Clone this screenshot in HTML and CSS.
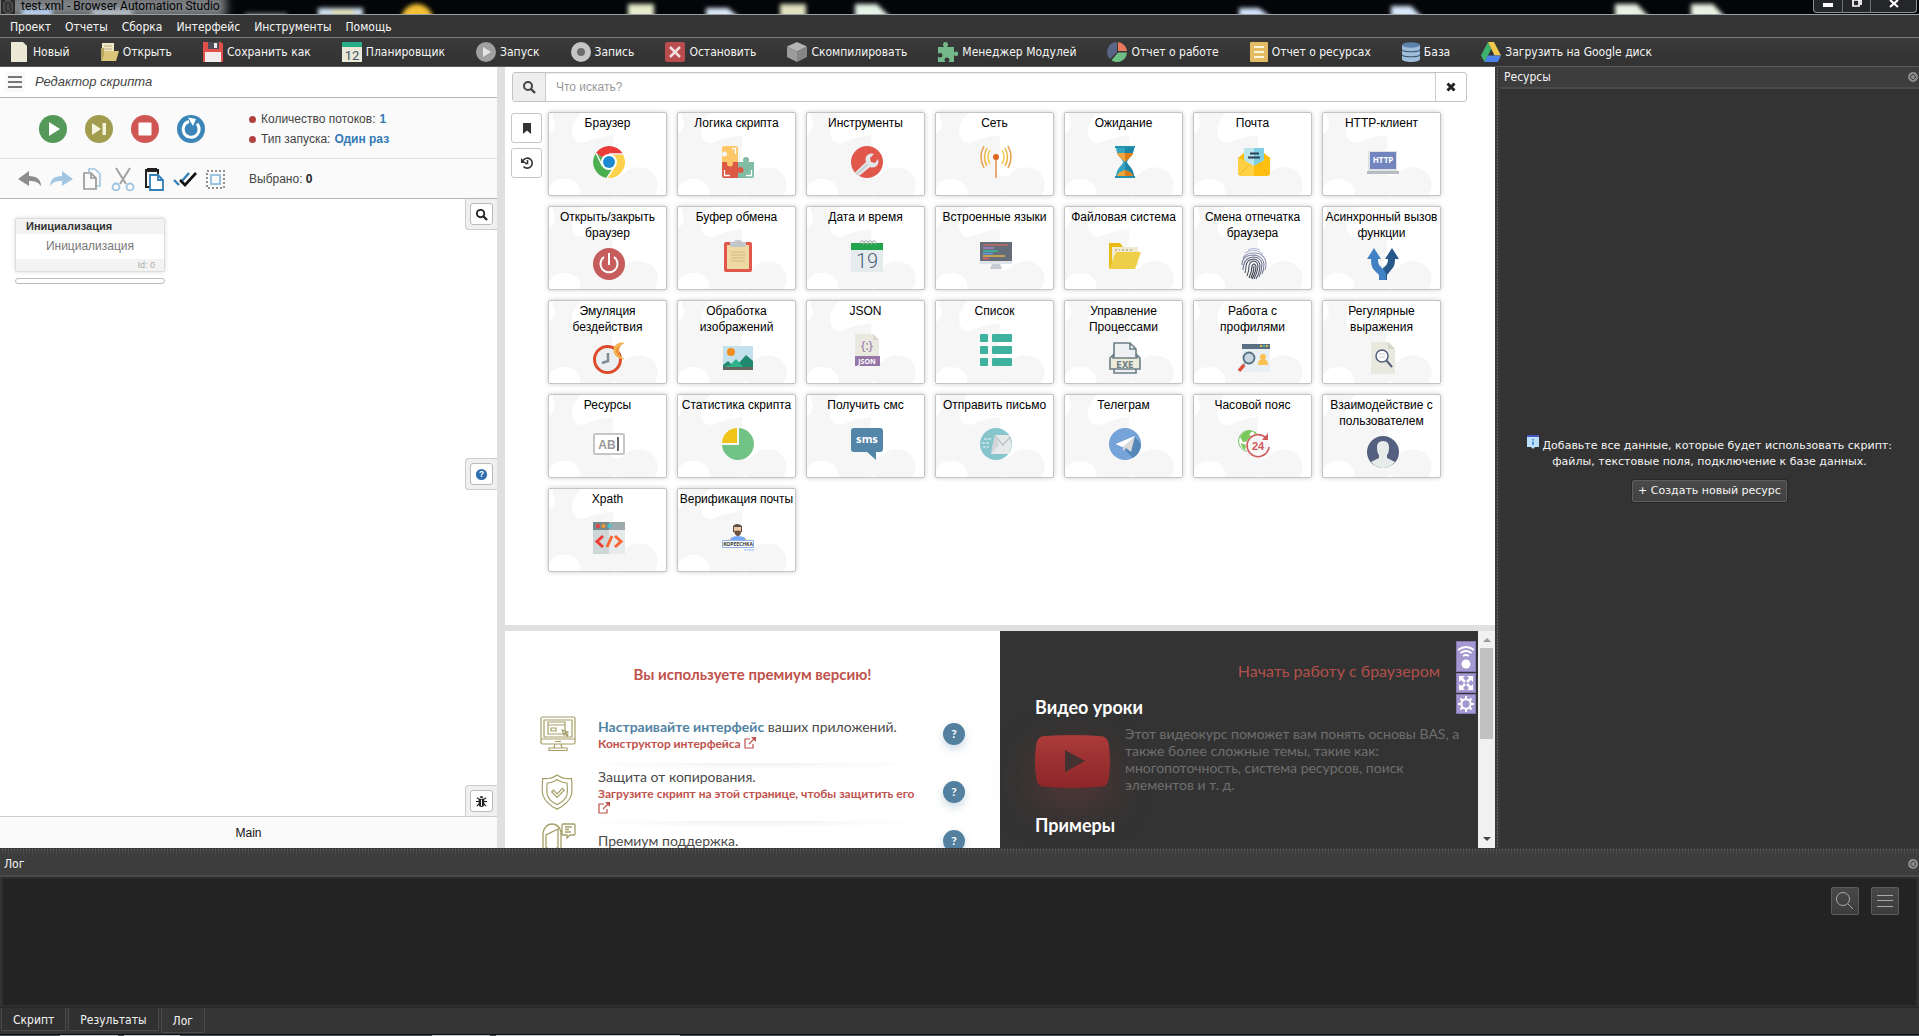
FILE: index.html
```html
<!DOCTYPE html>
<html lang="ru">
<head>
<meta charset="utf-8">
<title>test.xml - Browser Automation Studio</title>
<link rel="stylesheet" href="styles.css">
</head>
<body>
<header class="titlebar">
  <svg class="desktop-glass" width="1919" height="14" aria-hidden="true">
    <defs><filter id="soft" x="-20%" y="-60%" width="140%" height="220%"><feGaussianBlur stdDeviation="2"/></filter>
    <filter id="softer" x="-20%" y="-100%" width="140%" height="300%"><feGaussianBlur stdDeviation="5"/></filter></defs>
    <rect x="-10" y="-6" width="236" height="24" fill="#7d8084" filter="url(#softer)"/>
    <g filter="url(#soft)">
      <rect x="22" y="9" width="30" height="8" fill="#b9d2f2"/><rect x="92" y="9" width="40" height="8" fill="#b4bcc4"/>
      <rect x="318" y="8" width="45" height="9" fill="#cfe0ee"/><rect x="332" y="10" width="22" height="6" fill="#e5dfae"/>
      <circle cx="417" cy="20" r="16" fill="#f4c034"/>
      <rect x="245" y="13" width="42" height="5" fill="#67727c"/>
      <rect x="628" y="4" width="26" height="14" fill="#e6eccb"/>
      <path d="M706 8h22l12 10h-34z" fill="#dbe9fb"/><rect x="780" y="4" width="26" height="14" fill="#dfe0bd"/>
      <path d="M855 4h22l14 14h-36z" fill="#e4f3e6"/><path d="M1239 8h20l13 10h-33z" fill="#d3e2fa"/>
      <path d="M1391 6h20l12 12h-32z" fill="#d8e8fb"/><path d="M1615 4h22l13 14h-35z" fill="#e8f2e2"/><path d="M1691 4h22l13 14h-35z" fill="#e8f2e2"/>
    </g>
  </svg>
  <svg class="app-logo" viewBox="0 0 14 14" aria-hidden="true"><rect width="14" height="14" fill="#4a4a4a"/><path d="M4 1H1v12h3M10 1h3v12h-3" fill="none" stroke="#222" stroke-width="1.5"/><path d="M5 3v8h3.500q1.500-.500 1.500-2t-2-2.200q1.500-.600 1.500-2T8 3z" fill="none" stroke="#222"/></svg>
  <h1>test.xml - Browser Automation Studio</h1>
  <div class="window-buttons">
    <button aria-label="Свернуть"><svg viewBox="0 0 12 8"><rect x="1" y="3" width="10" height="4" fill="#fff"/></svg></button>
    <button aria-label="Восстановить"><svg viewBox="0 0 12 8"><path d="M4 0h6v5M2 0h6v6H2z" fill="none" stroke="#fff" stroke-width="1.700"/></svg></button>
    <button class="wide" aria-label="Закрыть"><svg viewBox="0 0 12 8"><path d="M2 0l8 7M10 0L2 7" stroke="#fff" stroke-width="2.200"/></svg></button>
  </div>
</header>

<nav class="menubar">
  <button>Проект</button><button>Отчеты</button><button>Сборка</button><button>Интерфейс</button><button>Инструменты</button><button>Помощь</button>
</nav>

<div class="toolbar" role="toolbar">
  <button class="first"><svg class="ti narrow" viewBox="0 0 16 20"><path d="M0 0h12l4 4v16H0z" fill="#ece8d6"/></svg>Новый</button>
  <button><svg class="ti short" viewBox="0 0 18 20"><path d="M1 1h12v14H1z" fill="#efe6c3"/><path d="M3 4h8M3 7h8M3 10h7" stroke="#b9ad80"/><path d="M0 6h3v13H0z" fill="#b7a560"/><path d="M1 19l3-10h14l-3 10z" fill="#dcc67a"/></svg>Открыть</button>
  <button><svg class="ti" viewBox="0 0 20 20"><path d="M0 0h18l2 2v18H0z" fill="#e2504c"/><path d="M5 0h11v7H5z" fill="#4e4c58"/><path d="M11 1h3v5h-3z" fill="#eee"/><path d="M2 10h16v10H2z" fill="#f3ecec"/></svg>Сохранить как</button>
  <button><svg class="ti" viewBox="0 0 20 20"><path d="M0 0h20v20H0z" fill="#e9e8d8"/><path d="M0 0h20v5H0z" fill="#27ae86"/><text x="10" y="18" text-anchor="middle" font-family="Roboto, sans-serif" font-size="13" fill="#465566">12</text></svg>Планировщик</button>
  <button><svg class="ti" viewBox="0 0 20 20"><circle cx="10" cy="10" r="10" fill="#a0a0a0"/><path d="M7 5l8 5-8 5z" fill="#e5e5e5"/></svg>Запуск</button>
  <button><svg class="ti" viewBox="0 0 20 20"><circle cx="10" cy="10" r="10" fill="#c6c6c6"/><circle cx="10" cy="10" r="4" fill="#6d6d6d"/></svg>Запись</button>
  <button><svg class="ti" viewBox="0 0 20 20"><rect width="20" height="20" rx="2" fill="#b94c4e"/><path d="M5 5l10 10M15 5L5 15" stroke="#f5dede" stroke-width="2.500"/></svg>Остановить</button>
  <button><svg class="ti" viewBox="0 0 20 20"><path d="M10 0l10 4.500-10 5L0 4.500z" fill="#b5b5b5"/><path d="M0 4.500l10 5V20L0 15z" fill="#9c9c9c"/><path d="M20 4.500l-10 5V20l10-5z" fill="#868686"/></svg>Скомпилировать</button>
  <button><svg class="ti" viewBox="0 0 20 20"><path d="M0 5h6c-.6-1-1-1.500-1-2.500a2.500 2.500 0 0 1 5 0c0 1-.4 1.500-1 2.500h7v5.500c1-.6 1.500-1 2.200-1a2.200 2.200 0 0 1 0 4.500c-.7 0-1.200-.4-2.200-1V20h-5.500c.6-1 1-1.300 1-2a2.500 2.500 0 0 0-5 0c0 .7.400 1 1 2H0v-5.500c1 .6 1.500 1 2.200 1a2.200 2.200 0 0 0 0-4.500c-.7 0-1.200.4-2.200 1z" fill="#73b98a"/></svg>Менеджер Модулей</button>
  <button><svg class="ti" viewBox="0 0 20 20"><path d="M10 10V0A10 10 0 0 0 3 17z" fill="#5a6685"/><path d="M11 9V0a10 10 0 0 1 9 9z" fill="#ea7a5c"/><path d="M11 10.500h9A10 10 0 0 1 4.500 18.300z" fill="#6fbf85"/></svg>Отчет о работе</button>
  <button><svg class="ti short" viewBox="0 0 18 20"><rect width="18" height="20" rx="1" fill="#e2bb62"/><path d="M4 5h10M4 10h10M4 15h10" stroke="#fdf6dd" stroke-width="2"/></svg>Отчет о ресурсах</button>
  <button><svg class="ti short" viewBox="0 0 18 20"><path d="M0 3v14c0 4 18 4 18 0V3z" fill="#9fbddb"/><ellipse cx="9" cy="3" rx="9" ry="2.800" fill="#5d83ac"/><path d="M0 7.500c0 3 18 3 18 0M0 12.500c0 3 18 3 18 0" fill="none" stroke="#3f5974" stroke-width="1.200"/></svg>База</button>
  <button><svg class="ti" viewBox="0 0 20 20"><path d="M7 0L0 13.500 3.500 20 10.300 7z" fill="#3db26d"/><path d="M7 0h6l7 13.500h-6.500z" fill="#f1c94f"/><path d="M6.800 13.500H20L16.800 20H3.500z" fill="#4a82e8"/></svg>Загрузить на Google диск</button>
</div>

<main class="workspace">
  <section class="editor">
    <header class="editor-head">
      <button class="burger" aria-label="Меню"><svg viewBox="0 0 14 14"><path d="M0 2h14M0 7h14M0 12h14" stroke="#777" stroke-width="2"/></svg></button>
      <em>Редактор скрипта</em>
    </header>
    <div class="run-bar">
      <div class="run-buttons">
        <button aria-label="Запустить"><svg viewBox="0 0 28 28"><circle cx="14" cy="14" r="14" fill="#54985a"/><path d="M10 7l11 7-11 7z" fill="#fff"/></svg></button>
        <button aria-label="Шаг"><svg viewBox="0 0 28 28"><circle cx="14" cy="14" r="14" fill="#a29c4f"/><path d="M7 8l9 6-9 6zM17.500 8H21v12h-3.500z" fill="#f6f3dd"/></svg></button>
        <button aria-label="Стоп"><svg viewBox="0 0 28 28"><circle cx="14" cy="14" r="14" fill="#d05654"/><rect x="7.500" y="7.500" width="13" height="13" rx="1" fill="#fff"/></svg></button>
        <button aria-label="Перезапустить"><svg viewBox="0 0 28 28"><circle cx="14" cy="14" r="14" fill="#3b85b9"/><path d="M12 6.500a8 8 0 1 0 8 2.300" fill="none" stroke="#fff" stroke-width="3"/><path d="M11 2.500l8 1.500-3 7z" fill="#fff"/></svg></button>
      </div>
      <ul class="run-info">
        <li>Количество потоков: <a href="#threads">1</a></li>
        <li>Тип запуска: <a href="#mode">Один раз</a></li>
      </ul>
    </div>
    <div class="edit-bar">
      <div class="edit-buttons">
        <button aria-label="Отменить"><svg viewBox="0 0 24 24"><path d="M0 12l11-8v5c8 0 12 4 12 10-3-4-6-5-12-5v5z" fill="#8d8d8d"/></svg></button>
        <button aria-label="Повторить"><svg viewBox="0 0 24 24"><path d="M24 12L13 4v5C5 9 1 13 1 19c3-4 6-5 12-5v5z" fill="#a3c7e2"/></svg></button>
        <button aria-label="Копировать"><svg viewBox="0 0 24 24" fill="#fafafa"><path d="M9 5V2h6l5 5v12h-4" stroke="#a3c7e2" stroke-width="1.700"/><path d="M4 6h7l5 5v11H4zM11 6v5h5" stroke="#999" stroke-width="1.700"/></svg></button>
        <button aria-label="Вырезать"><svg viewBox="0 0 24 24" fill="none"><path d="M5 1l10 16M19 1L9 17" stroke="#a2a2a2" stroke-width="2"/><circle cx="5" cy="20" r="3.500" stroke="#9cc4e0" stroke-width="1.800"/><circle cx="19" cy="20" r="3.500" stroke="#9cc4e0" stroke-width="1.800"/></svg></button>
        <button aria-label="Вставить"><svg viewBox="0 0 24 24"><path d="M8 20H4V3h12v4" fill="none" stroke="#222" stroke-width="2"/><path d="M5 1h10v4H5z" fill="#222"/><path d="M8 8h8l5 5v10H8zM16 8v5h5" fill="#fff" stroke="#337fb8" stroke-width="1.800"/></svg></button>
        <button aria-label="Выделить все"><svg viewBox="0 0 24 24" fill="none"><path d="M1 13l5 5M9 14l7-8" stroke="#337fb8" stroke-width="2.400"/><path d="M7 13l5 5L23 6" stroke="#111" stroke-width="2.600"/></svg></button>
        <button aria-label="Выделить область"><svg viewBox="0 0 24 24" fill="none"><rect x="3" y="4" width="17" height="17" stroke="#909090" stroke-width="2" stroke-dasharray="2 2"/><rect x="7" y="8" width="9" height="9" stroke="#9cc4e0" stroke-width="2"/></svg></button>
      </div>
      <p>Выбрано: <b>0</b></p>
    </div>
    <div class="canvas">
      <article class="node"><h2>Инициализация</h2><p>Инициализация</p><footer>Id: 0</footer></article>
      <div class="node-slot"></div>
      <div class="corner corner-top"><button aria-label="Поиск"><svg viewBox="0 0 14 14"><circle cx="6" cy="6" r="4" fill="none" stroke="#222" stroke-width="2"/><path d="M9 9l4 4" stroke="#222" stroke-width="2.400"/></svg></button></div>
      <div class="corner corner-mid"><button aria-label="Справка"><svg viewBox="0 0 14 14"><circle cx="7" cy="7" r="6" fill="#2f6fae"/><text x="7" y="10" text-anchor="middle" font-family="Liberation Sans, sans-serif" font-weight="bold" font-size="9" fill="#fff">?</text></svg></button></div>
      <div class="corner corner-low"><button aria-label="Отладка"><svg viewBox="0 0 14 14"><path d="M5 3a2 2 0 0 1 4 0z" fill="#222"/><path d="M4 4h6v6a3 3 0 0 1-6 0z" fill="#222"/><path d="M1 7h12M2 3l3 2M12 3L9 5M2 12l3-3M12 12L9 9" stroke="#222" stroke-width="1.200"/><path d="M7 5v7" stroke="#fff"/></svg></button></div>
    </div>
    <footer class="editor-foot">Main</footer>
  </section>

  <div class="split"></div>

  <section class="center">
    <div class="palette">
      <div class="search">
        <label for="q" aria-label="Поиск"><svg viewBox="0 0 14 14"><circle cx="6" cy="6" r="4" fill="none" stroke="#444" stroke-width="2"/><path d="M9 9l4 4" stroke="#444" stroke-width="2.400"/></svg></label>
        <input id="q" type="text" placeholder="Что искать?">
        <button aria-label="Очистить"><svg viewBox="0 0 14 14"><path d="M3.500 3.500l7 7M10.500 3.500l-7 7" stroke="#222" stroke-width="3"/></svg></button>
      </div>
      <div class="palette-body">
        <div class="side">
          <button aria-label="Закладки"><svg viewBox="0 0 14 14"><path d="M3 2h8v11L7 9.500 3 13z" fill="#333"/></svg></button>
          <button aria-label="История"><svg viewBox="0 0 14 14"><path d="M3 4.500A5 5 0 1 1 3.500 10.500M7.500 4v3.500H5" fill="none" stroke="#333" stroke-width="1.600"/><path d="M1 2l0 5h5z" fill="#333"/></svg></button>
        </div>
        <div class="cards">
          <button class="card"><span>Браузер</span><i><svg viewBox="0 0 32 32"><path d="M16 16L3 7A16 16 0 0 1 30 8z" fill="#e93c38"/><path d="M16 16L3 7a16 16 0 0 0 11 25l7-12z" fill="#4bae4f"/><path d="M16 16l5 4-7 12A16 16 0 0 0 30 8.500H17z" fill="#fed24a"/><path d="M16 8h14M9.500 20L3 7M22 20l-8 12" stroke="#f7f7f7" stroke-width="1.500"/><circle cx="16" cy="16" r="8" fill="#fff"/><circle cx="16" cy="16" r="6" fill="#1b8ad3"/></svg></i></button>
          <button class="card"><span>Логика скрипта</span><i><svg viewBox="0 0 32 32"><path d="M2 0h12q2 0 2 2v14H0V2q0-2 2-2z" fill="#fec768"/><path d="M16 16h16v14q0 2-2 2H16z" fill="#80bda4"/><circle cx="24" cy="14" r="3" fill="#80bda4"/><path d="M0 16h16v16H2q-2 0-2-2z" fill="#dc5a45"/><circle cx="18.500" cy="24" r="3" fill="#dc5a45"/><circle cx="8" cy="17.500" r="3" fill="#fec768"/><circle cx="2.500" cy="8" r="2.500" fill="#f7f7f7"/><path d="M10 2.500h3.500V8M2.500 24v5.500H8M24 29.500h5.500V24" fill="none" stroke="#fff" stroke-width="1.300"/></svg></i></button>
          <button class="card"><span>Инструменты</span><i><svg viewBox="0 0 32 32"><circle cx="16" cy="16" r="16" fill="#e2574c"/><path d="M4 26.500L15 16c-2-6 3-10 8-8l-4 4 1 4 4 1 3-4c2 6-3 10-8 8L8 30z" fill="#e3e7ea"/><path d="M6 28l11-10" stroke="#c9ced2" stroke-width="2"/></svg></i></button>
          <button class="card"><span>Сеть</span><i><svg viewBox="0 0 32 32" fill="none"><path d="M16 13v19" stroke="#eda878" stroke-width="2"/><circle cx="16" cy="11" r="3" fill="#e0681f"/><path d="M10 4q-4 7 0 14M22 4q4 7 0 14" stroke="#f2c84b" stroke-width="1.500"/><path d="M7 2q-5 9 0 18M25 2q5 9 0 18" stroke="#eeb23f" stroke-width="1.500"/><path d="M4 0q-6 11 0 22M28 0q6 11 0 22" stroke="#e8a050" stroke-width="1.500"/></svg></i></button>
          <button class="card"><span>Ожидание</span><i><svg viewBox="0 0 32 32"><path d="M7 1h18c0 9-7 12-7 15s7 6 7 15H7c0-9 7-12 7-15S7 10 7 1z" fill="#36a3c0"/><path d="M16 1h9c0 9-7 12-7 15s7 6 7 15h-9z" fill="#1d86a6"/><path d="M8 7h16c-1 4-6 6-8 9-2-3-7-5-8-9zM8 30q1-4 8-6 7 2 8 6z" fill="#f0a53a"/><path d="M16 7h8c-1 4-6 6-8 9zM16 24q7 2 8 6h-8z" fill="#de7d14"/><path d="M6 0h20v2H6zM6 30h20v2H6z" fill="#2193ae"/></svg></i></button>
          <button class="card"><span>Почта</span><i><svg viewBox="0 0 32 32"><path d="M0 12l6-5h20l6 5v14q0 4-4 4H4q-4 0-4-4z" fill="#fdbd10"/><path d="M6 2h20v12l-10 8L6 14z" fill="#b9e5ee"/><path d="M16 2h10v12l-10 8z" fill="#80cfe3"/><path d="M12 7.500h9M10 11.500h12" stroke="#2d4054" stroke-width="2"/><path d="M0 11l16 9 16-9v15q0 4-4 4H4q-4 0-4-4z" fill="#ffd043"/><path d="M32 11l-16 9v10h12q4 0 4-4z" fill="#fdc010"/><path d="M1 29l10-10M31 29L21 19" stroke="#f2b01c" stroke-width=".8"/></svg></i></button>
          <button class="card"><span>HTTP-клиент</span><i><svg viewBox="0 0 32 32"><path d="M1 5h29v21H1z" fill="#dfe3e6"/><path d="M3 6h26v17H3z" fill="#7285bf"/><text x="16" y="17" text-anchor="middle" font-family="Noto Sans, sans-serif" font-weight="bold" font-size="8" fill="#fff">HTTP</text><path d="M0 25h32v3H0z" fill="#b7bcc2"/></svg></i></button>

          <button class="card"><span>Открыть/закрыть браузер</span><i><svg viewBox="0 0 32 32"><circle cx="16" cy="16" r="16" fill="#c75c5c"/><path d="M11 9a8.500 8.500 0 1 0 10 0M16 5v12" fill="none" stroke="#fff" stroke-width="2"/></svg></i></button>
          <button class="card"><span>Буфер обмена</span><i><svg viewBox="0 0 32 32"><rect x="2" y="2" width="28" height="30" rx="2" fill="#e2574c"/><path d="M5 5h22v24H5z" fill="#efd9a3"/><path d="M8 2h4q0-2 4-2t4 2h4v3q0 2-3 2H11q-3 0-3-2z" fill="#c0c6ca"/><path d="M9 12h14M9 15h14M9 18h14M9 21h14" stroke="#d4b87e"/></svg></i></button>
          <button class="card"><span>Дата и время</span><i><svg viewBox="0 0 32 32"><path d="M0 3h32v29H0z" fill="#e6ecee"/><path d="M0 3h32v7H0z" fill="#22a44c"/><path d="M9 4q0-4 3-3t0 4M13 4q0-4 3-3t0 4M17 4q0-4 3-3t0 4M21 4q0-4 3-3t0 4" fill="none" stroke="#9aa8a0"/><text x="16" y="28" text-anchor="middle" font-family="Roboto, sans-serif" font-weight="300" font-size="20" fill="#4b6078">19</text></svg></i></button>
          <button class="card"><span>Встроенные языки</span><i><svg viewBox="0 0 32 32"><path d="M0 2h32v19H0z" fill="#656d78"/><path d="M0 21h32v3H0z" fill="#dfe3e8"/><path d="M12 24h8l2 5H10z" fill="#c8ccd4"/><path d="M3 5h25" stroke="#ed6b55"/><path d="M3 8h11" stroke="#a786d0" stroke-width="1.500"/><path d="M3 11h15" stroke="#37bc9b" stroke-width="1.500"/><path d="M3 13.500h10" stroke="#5d9cec" stroke-width="1.500"/><path d="M3 16h22" stroke="#e0b348" stroke-width="1.500"/><path d="M3 18.500h6" stroke="#ed5565" stroke-width="1.500"/></svg></i></button>
          <button class="card"><span>Файловая система</span><i><svg viewBox="0 0 32 32"><path d="M0 3h11l3 4v21H0z" fill="#ebba16"/><path d="M3 7h26v18H3z" fill="#f1ead2"/><path d="M6 10h2M10 10h1M13 10h2M17 10h2M21 10h2" stroke="#cabf97" stroke-width="2"/><path d="M7 12h25l-6 17H0z" fill="#efce4a"/></svg></i></button>
          <button class="card"><span>Смена отпечатка браузера</span><i><svg viewBox="0 0 32 32" fill="none"><g stroke-width="1.100"><path d="M10 2q6-3 12 0M7 5q9-6 18 1" stroke="#b4bad8"/><path d="M5 10q3-5 11-5t11 6q2 6 0 11" stroke="#9197b6"/><path d="M4 17q0-10 12-10 9 1 10 9 0 6-2 10" stroke="#7a809c"/><path d="M5 22q0-3 1-6 2-7 10-7 7 1 8 7 0 7-3 13" stroke="#6d7189"/><path d="M7 25q1-4 1-7 1-7 8-7 5 1 6 6 0 7-4 14" stroke="#55586c"/><path d="M9 28q2-5 2-10 1-5 5-5 4 1 4 6-1 6-4 12" stroke="#4b4e62"/><path d="M11 30q3-6 3-12 2-4 4 0 0 6-4 13M16 18q0 6-3 12" stroke="#3c3f50"/></g></svg></i></button>
          <button class="card"><span>Асинхронный вызов функции</span><i><svg viewBox="0 0 32 32"><path d="M25 0l7 11h-4c0 6-1 8-4 11l-4 5v5h-4V20c4-3 5-5 5-9h-3z" fill="#28588a"/><path d="M7 0l7 11h-3c0 5 1 6 4 9s4 5 4 8v4h-7v-5l-4-4c-3-3-4-6-4-12H0z" fill="#4182c4"/></svg></i></button>

          <button class="card"><span>Эмуляция бездействия</span><i><svg viewBox="0 0 32 32"><circle cx="14.500" cy="17.500" r="13" fill="#eceff1" stroke="#dd4a2c" stroke-width="3"/><path d="M15 11v8l-6 2" fill="none" stroke="#7f8b93" stroke-width="2.500"/><path d="M32 1q-7-2-11 4-2 6 3 10 4 3 8 2-6-2-6-8t6-8z" fill="#f2b351"/><path d="M28 3q-5 5-1 12-3-2-4-6 1-4 5-6z" fill="#ed8a3c"/></svg></i></button>
          <button class="card"><span>Обработка изображений</span><i><svg viewBox="0 0 32 32"><path d="M1 4h30v24H1z" fill="#c3e1ed"/><circle cx="9" cy="10" r="4" fill="#ef8d1e"/><path d="M1 26v-3l5-4 4 4zM16 22l8-9 7 6v7H16z" fill="#1f8a6d"/><path d="M5 26l9-9 8 9z" fill="#2eb28b"/><path d="M1 25h30v3H1z" fill="#67645e"/></svg></i></button>
          <button class="card"><span>JSON</span><i><svg viewBox="0 0 32 32"><path d="M4 0h18l6 6v26H4z" fill="#e9e9e0"/><path d="M22 0l6 6h-6z" fill="#d9d7ca"/><path d="M4 22h25v10H4z" fill="#9777a8"/><text x="16" y="16" text-anchor="middle" font-family="Noto Sans, sans-serif" font-size="12" fill="#9777a8">{:}</text><text x="16" y="30" text-anchor="middle" font-family="Noto Sans, sans-serif" font-weight="bold" font-size="7" fill="#fff">JSON</text></svg></i></button>
          <button class="card"><span>Список</span><i><svg viewBox="0 0 32 32" fill="#3db39e"><rect width="8" height="8" rx="1"/><rect x="12" width="20" height="8" rx="1"/><rect y="12" width="8" height="8" rx="1"/><rect x="12" y="12" width="20" height="8" rx="1"/><rect y="24" width="8" height="8" rx="1"/><rect x="12" y="24" width="20" height="8" rx="1"/></svg></i></button>
          <button class="card"><span>Управление Процессами</span><i><svg viewBox="0 0 32 32"><path d="M5 15V1h16l6 6v8M21 1v6h6" fill="#eef0f1" stroke="#6b7f86" stroke-width="1.600"/><path d="M5 27v4h22v-4" fill="#eef0f1" stroke="#6b7f86" stroke-width="1.600"/><path d="M4 13l-3 3v11h30V16l-3-3v3H4z" fill="#edebda" stroke="#6b7f86" stroke-width="1.600"/><text x="16" y="25.500" text-anchor="middle" font-family="DejaVu Sans Condensed, sans-serif" font-weight="bold" font-size="9" fill="#6b7f86">EXE</text></svg></i></button>
          <button class="card"><span>Работа с профилями</span><i><svg viewBox="0 0 32 32"><path d="M4 2h28v28H4z" fill="#e9eff3"/><path d="M4 2h28v5H4z" fill="#5b7083"/><path d="M22 4h2M28 4h2" stroke="#e2b53f" stroke-width="2"/><path d="M25 4h2" stroke="#4cb5a1" stroke-width="2"/><circle cx="25" cy="15" r="3" fill="#f8c152"/><path d="M20 23q0-6 5-6t5 6z" fill="#f8c152"/><circle cx="11" cy="16" r="5.500" fill="#c9d6df" stroke="#556f83" stroke-width="1.800"/><path d="M7 21l-2 3" stroke="#a9a9a9" stroke-width="2"/><path d="M6 23l-5 6" stroke="#df4d3c" stroke-width="3.500"/></svg></i></button>
          <button class="card"><span>Регулярные выражения</span><i><svg viewBox="0 0 32 32"><path d="M4 0h17l7 7v25H4z" fill="#e8e8df"/><path d="M21 0l7 7h-7z" fill="#d6d5c6"/><circle cx="15" cy="14" r="6" fill="#fff" stroke="#545e7d" stroke-width="1.500"/><path d="M12 12h6M12 15h6" stroke="#ccc"/><path d="M19 18l6 7" stroke="#545e7d" stroke-width="2"/></svg></i></button>

          <button class="card"><span>Ресурсы</span><i><svg viewBox="0 0 32 32"><rect x="1" y="6" width="30" height="20" rx="1" fill="#fff" stroke="#c6c6c6" stroke-width="2"/><text x="14" y="21" text-anchor="middle" font-family="Liberation Sans, sans-serif" font-weight="bold" font-size="12" fill="#999">AB</text><path d="M25 9v14" stroke="#666" stroke-width="2"/></svg></i></button>
          <button class="card"><span>Статистика скрипта</span><i><svg viewBox="0 0 32 32"><path d="M17 0v17H0A16 16 0 1 0 17 0z" fill="#71c285"/><path d="M15 0v15H0A15.500 15.500 0 0 1 15 0z" fill="#f1c419"/></svg></i></button>
          <button class="card"><span>Получить смс</span><i><svg viewBox="0 0 32 32"><path d="M3 0h26q3 0 3 3v18q0 3-3 3h-4v8l-9-8H3q-3 0-3-3V3q0-3 3-3z" fill="#5486aa"/><text x="16" y="15" text-anchor="middle" font-family="Noto Sans, sans-serif" font-weight="bold" font-size="11" fill="#fff">sms</text></svg></i></button>
          <button class="card"><span>Отправить письмо</span><i><svg viewBox="0 0 32 32"><circle cx="16" cy="16" r="16" fill="#87c5cd"/><path d="M15 7h14l3 10-3 9H11z" fill="#e6e9ea"/><path d="M15 7l4 10-8 9z" fill="#d2d6d8"/><path d="M15 8l8 9 7-8" fill="none" stroke="#c0c5c8" stroke-width="1.500"/><path d="M4 11h8M2 15h8M3 19h6" stroke="#e9f4f5" stroke-width="1.200" stroke-dasharray="3 1"/></svg></i></button>
          <button class="card"><span>Телеграм</span><i><svg viewBox="0 0 32 32"><circle cx="16" cy="16" r="16" fill="#76a3da"/><path d="M25 8l7 8q0 9-8 14l-8-8z" fill="#5486b8"/><path d="M7 16l19-8-8 7-4 4z" fill="#fff"/><path d="M26 8l-4 16-5-4-3 3v-5z" fill="#d9d9db"/><path d="M7 16l19-8-11 10-2 1z" fill="#fff"/></svg></i></button>
          <button class="card"><span>Часовой пояс</span><i><svg viewBox="0 0 32 32"><circle cx="11" cy="13" r="10.500" fill="#fff" stroke="#79c26a"/><path d="M2 9q5-8 12-6l-3 4 4 2-4 4-6 1zM3 15l5 2-1 5q-4-3-4-7zM16 3l4 4-3 3z" fill="#79c85a"/><circle cx="20" cy="18" r="12" fill="#f7f7f7"/><path d="M28 10A11 11 0 1 0 31 19" fill="none" stroke="#cf5a5c" stroke-width="1.600"/><path d="M30 5v7h-6z" fill="#cf5a5c"/><text x="20" y="22" text-anchor="middle" font-family="Liberation Sans, sans-serif" font-weight="bold" font-size="11" fill="#cf5a5c">24</text></svg></i></button>
          <button class="card"><span>Взаимодействие с пользователем</span><i><svg viewBox="0 0 32 32"><circle cx="16" cy="16" r="16" fill="#556080"/><path d="M10 11q0-6 6-6t6 6q0 6-2 8v3l8 4q-5 6-12 6T4 26l8-4v-3q-2-2-2-8z" fill="#e7eceb"/></svg></i></button>

          <button class="card"><span>Xpath</span><i><svg viewBox="0 0 32 32"><path d="M0 0h32v32H0z" fill="#e6eaeb"/><path d="M0 0h16v32H0z" fill="#cfd6d8"/><path d="M0 0h32v8H0z" fill="#9caaab"/><path d="M0 0h16v8H0z" fill="#76888c"/><circle cx="5" cy="4" r="2" fill="#ee3b3e"/><circle cx="10.500" cy="4" r="2" fill="#f8942e"/><circle cx="16.500" cy="4" r="2" fill="#43c5d0"/><path d="M10 14l-6 5.500 6 5.500" fill="none" stroke="#ee3b35" stroke-width="3"/><path d="M19 14l-5 11M22 14l6 5.500-6 5.500" fill="none" stroke="#fb6634" stroke-width="3"/></svg></i></button>
          <button class="card"><span>Верификация почты</span><i><svg viewBox="0 0 32 32"><path d="M11 4q4-4 9 0v6h-9z" fill="#5d4b40"/><path d="M12 5h7v6q-3 4-7 0z" fill="#f0c9a5"/><path d="M12 9q4-1 7 0 0 5-3 5t-4-5z" fill="#6b5140"/><path d="M6 20q2-6 10-6t10 6z" fill="#75a8f5"/><path d="M6 20q0-3 3-4v4zM26 20q0-3-3-4v4z" fill="#f0c9a5"/><path d="M.5 18.500h31v7H.5z" fill="#fff" stroke="#8bb0ec"/><text x="16" y="24" text-anchor="middle" font-family="Noto Sans, sans-serif" font-weight="bold" font-size="5" fill="#333">KOPEECHKA</text><path d="M22 28h10" stroke="#a4c4f5" stroke-width="1.500" stroke-dasharray="2 .5"/></svg></i></button>
        </div>
      </div>
    </div>

    <div class="split"></div>

    <div class="welcome">
      <div class="premium">
        <h2>Вы используете премиум версию!</h2>
        <ul>
          <li>
            <svg class="feature" viewBox="0 0 36 36" fill="none" stroke="#a39e66" stroke-width="1.200"><rect x="1" y="1" width="34" height="27" rx="1.500"/><path d="M1 23h34M4 4h28v17H4zM15 28l-1 4h8l-1-4M9 32h18v2.500H9zM15 25.500h6M8 6h17v12H8zM8 9h17M11 12h5v3h-5zM22 14l6 2-2 1 2 2-1 1-2-2-1 1z"/></svg>
            <div><strong class="blue">Настраивайте интерфейс</strong> ваших приложений.<a href="#designer">Конструктор интерфейса <svg class="ext" viewBox="0 0 12 12"><path d="M6 2H1v9h8V7M5 7l5-5" fill="none" stroke="currentColor" stroke-width="1.200"/><path d="M7 0h5v5z" fill="currentColor"/></svg></a></div>
            <button aria-label="Подробнее">?</button>
          </li>
          <li>
            <svg class="feature" viewBox="0 0 36 40" fill="none" stroke="#a39e66" stroke-width="1.300"><path d="M17 1q7 5 16 4 1 12 0 18-3 10-16 16Q4 33 1 23 0 17 1 5q9 1 16-4zM17 6q5 4 11 4 1 8 0 13-2 7-11 11Q8 30 6 23q-1-5 0-13 6 0 11-4z"/><path d="M11 20l2-2 4 4 6-6 2 2-8 8z"/></svg>
            <div>Защита от копирования.<a href="#protect">Загрузите скрипт на этой странице, чтобы защитить его <svg class="ext" viewBox="0 0 12 12"><path d="M6 2H1v9h8V7M5 7l5-5" fill="none" stroke="currentColor" stroke-width="1.200"/><path d="M7 0h5v5z" fill="currentColor"/></svg></a></div>
            <button aria-label="Подробнее">?</button>
          </li>
          <li>
            <svg class="feature" viewBox="0 0 36 36" fill="none" stroke="#a39e66" stroke-width="1.300"><path d="M3 26V10q2-9 9-9t9 8v17M6 24V12l12-6v18q-6 6-12 0zM23 1h11q1 0 1 1v9q0 1-1 1h-4l-3 3v-3h-4q-1 0-1-1V2q0-1 1-1zM25 4h7M25 6.500h4M25 9h6M1 35q1-7 11-8 10 1 11 8"/></svg>
            <div>Премиум поддержка.</div>
            <button aria-label="Подробнее">?</button>
          </li>
        </ul>
      </div>
      <div class="start">
        <a class="start-link" href="#browser">Начать работу с браузером</a>
        <h2>Видео уроки</h2>
        <div class="video">
          <svg viewBox="0 0 75 53" aria-hidden="true"><defs><linearGradient id="yt" x2="0" y2="1"><stop stop-color="#ab3b39"/><stop offset="1" stop-color="#8c2629"/></linearGradient></defs><path d="M10 1Q37-1 65 1q8 0 9 9 2 16 0 33-1 9-9 9-28 2-55 0-8 0-9-9-2-17 0-33 1-9 9-9z" fill="url(#yt)"/><path d="M30 15l20 11-20 11z" fill="#443232"/></svg>
          <p>Этот видеокурс поможет вам понять основы BAS, а также более сложные темы, такие как: многопоточность, система ресурсов, поиск элементов и т. д.</p>
        </div>
        <h2>Примеры</h2>
        <div class="float-tools">
          <button class="tall" aria-label="Подключение"><svg viewBox="0 0 18 28"><path d="M1 7q8-6 16 0M3.500 10q5.500-4 11 0M6 13q3-2 6 0" fill="none" stroke="#fff" stroke-width="1.800"/><circle cx="9" cy="21" r="4.500" fill="#fff"/></svg></button>
          <button aria-label="Развернуть"><svg viewBox="0 0 18 18"><path d="M2 2h6L2 8zM16 2v6l-6-6zM2 16v-6l6 6zM16 16h-6l6-6z" fill="#fff"/><path d="M4 4l4 4M14 4l-4 4M4 14l4-4M14 14l-4-4" stroke="#fff" stroke-width="2.500"/></svg></button>
          <button aria-label="Настройки"><svg viewBox="0 0 18 18" fill="none" stroke="#fff"><circle cx="9" cy="9" r="4.700" stroke-width="2"/><path d="M9 1v3M9 14v3M1 9h3M14 9h3M3.500 3.500l2 2M12.500 12.500l2 2M14.500 3.500l-2 2M3.500 14.500l2-2" stroke-width="2"/></svg></button>
        </div>
      </div>
      <div class="scrollbar" aria-hidden="true"><b class="up"></b><span></span><b class="down"></b></div>
    </div>
  </section>

  <div class="dots-v"></div>

  <aside class="resources">
    <header class="dock-head"><h2>Ресурсы</h2><button aria-label="Закрыть"><svg viewBox="0 0 10 10"><circle cx="5" cy="5" r="5" fill="#8a8a8a"/><path d="M5 2l3 3-3 3-3-3z" fill="#8a8a8a" stroke="#444" stroke-width="1"/></svg></button></header>
    <div class="resources-body">
      <p><svg viewBox="0 0 12 14" aria-hidden="true"><path d="M0 0h12v12H8l-2 2-2-2H0z" fill="#bfe0fa"/><path d="M0 0h12v2H0z" fill="#4457c2"/><path d="M6 4v1.500M6 6.500V10" stroke="#2b7fd4" stroke-width="1.500"/></svg> Добавьте все данные, которые будет использовать скрипт:<br>файлы, текстовые поля, подключение к базе данных.</p>
      <button class="create">+ Создать новый ресурс</button>
    </div>
  </aside>
</main>

<div class="dots-h"></div>
<section class="log">
  <header class="dock-head"><h2>Лог</h2><button aria-label="Закрыть"><svg viewBox="0 0 10 10"><circle cx="5" cy="5" r="5" fill="#8a8a8a"/><path d="M5 2l3 3-3 3-3-3z" fill="#8a8a8a" stroke="#444" stroke-width="1"/></svg></button></header>
  <div class="log-body">
    <button aria-label="Поиск в логе"><svg viewBox="0 0 20 20" fill="none" stroke="#aaa"><circle cx="8" cy="8" r="6.500"/><path d="M13 13l5 5"/></svg></button>
    <button aria-label="Меню лога"><svg viewBox="0 0 20 20" fill="none" stroke="#aaa"><path d="M2 4.500h16M2 9.500h16M2 15.500h16"/></svg></button>
  </div>
  <nav class="tabs"><button>Скрипт</button><button>Результаты</button><button class="active">Лог</button></nav>
</section>
<div class="taskbar"></div>
</body>
</html>
```
FILE: styles.css
```css
* { box-sizing: border-box; }
body {
  margin: 0;
  height: 100vh;
  display: flex;
  flex-direction: column;
  overflow: hidden;
  background: #353535;
  color: #f5f5f5;
  font: 12px/16px "DejaVu Sans Condensed", Tahoma, sans-serif;
}
h1, h2, p, ul { margin: 0; padding: 0; font-size: 12px; font-weight: normal; }
ul { list-style: none; }
button, input { font: inherit; color: inherit; margin: 0; padding: 0; border: 0; background: none; }
svg { display: block; flex: none; }
a { text-decoration: none; }

/* window frame */
.titlebar {
  position: relative;
  flex: none;
  height: 15px;
  display: flex;
  align-items: flex-start;
  background: #030508;
  border-bottom: 1px solid #9aa2a3;
  overflow: hidden;
}
.desktop-glass { position: absolute; left: 0; top: 0; }
.app-logo { position: relative; width: 14px; height: 14px; margin-left: 1px; }
.titlebar h1 { position: relative; margin-left: 6px; line-height: 12px; color: #000; font-family: Roboto, sans-serif; white-space: nowrap; }
.window-buttons {
  position: relative;
  display: flex;
  height: 13px;
  margin: 0 2px 0 auto;
  border: 1px solid #8d8f92;
  border-top: 0;
  border-radius: 0 0 4px 4px;
  background: #24262a;
}
.window-buttons button { width: 28px; display: flex; justify-content: center; }
.window-buttons button + button { border-left: 1px solid #6d6f72; }
.window-buttons .wide { width: 46px; }
.window-buttons svg { width: 12px; height: 8px; }

.menubar {
  flex: none;
  height: 23px;
  padding: 1px 10px 0;
  display: flex;
  align-items: center;
  gap: 14px;
  border-bottom: 1px solid #7b7b7b;
}
.toolbar {
  flex: none;
  height: 29px;
  padding: 0 11px;
  display: flex;
  align-items: center;
  gap: 31px;
  background: linear-gradient(#3a3a3a, #323232);
  border-bottom: 1px solid #5c5c5c;
}
.toolbar button { display: flex; align-items: center; gap: 4px; white-space: nowrap; }
.toolbar .first { gap: 6px; }
.ti { width: 20px; height: 20px; }
.ti.short { width: 18px; }
.ti.narrow { width: 16px; }

.workspace {
  flex: 1;
  min-height: 0;
  display: grid;
  grid-template-columns: minmax(0, 497fr) 8px minmax(0, 990fr) 5px minmax(0, 419fr);
}
.split { background: #e0e0e0; }
.dots-v, .dots-h { background: #3a3a3a linear-gradient(#5e5e5e 2px, transparent 2px) 0 1px / 3px 3px; }
.dots-h { flex: none; height: 5px; }
.dots-v::before, .dots-h::before {
  content: "";
  display: block;
  height: 100%;
  background: repeating-linear-gradient(90deg, #3a3a3a 0 2px, transparent 2px 3px);
}

/* script editor */
.editor {
  display: flex;
  flex-direction: column;
  min-height: 0;
  background: #fff;
  color: #444;
  font-family: "Liberation Sans", Arial, sans-serif;
}
.editor-head {
  height: 31px;
  padding-left: 5px;
  display: flex;
  align-items: center;
  gap: 10px;
  border-bottom: 1px solid #b5b5b5;
  font-size: 13px;
}
.burger { width: 20px; height: 20px; background: #f9f9f9; display: grid; place-items: center; }
.burger svg { width: 14px; height: 14px; }
.run-bar {
  height: 61px;
  padding: 2px 0 0 39px;
  display: flex;
  align-items: center;
  background: #fafafa;
  border-bottom: 1px solid #ddd;
}
.run-buttons { display: flex; gap: 18px; width: 210px; flex: none; }
.run-buttons button, .run-buttons svg { width: 28px; height: 28px; }
.run-info li { line-height: 20px; display: flex; align-items: center; gap: 4px; }
.run-info li::before { content: ""; width: 7px; height: 7px; border-radius: 50%; background: #b0413e; margin-right: 1px; }
.run-info a { color: #337ab7; font-weight: bold; }
.edit-bar {
  height: 40px;
  padding-left: 18px;
  display: flex;
  align-items: center;
  background: #fafafa;
  border-bottom: 1px solid #b5b5b5;
}
.edit-buttons { display: flex; gap: 7px; width: 231px; flex: none; }
.edit-buttons button, .edit-buttons svg { width: 24px; height: 24px; }
.edit-bar b { color: #222; }
.canvas { position: relative; flex: 1; min-height: 0; padding: 19px 15px; }
.node { width: 150px; border: 1px solid #ddd; border-radius: 2px; box-shadow: 0 0 4px rgba(0,0,0,.15); }
.node h2 { padding-left: 10px; line-height: 15px; background: #f3f3f3; color: #333; font-size: 11px; font-weight: bold; }
.node p { line-height: 25px; text-align: center; color: #777; }
.node footer { padding-right: 9px; line-height: 12px; background: #f3f3f3; color: #aaa; font-size: 9px; text-align: right; }
.node-slot { width: 150px; height: 6px; margin-top: 6px; border: 1px solid #bbb; border-radius: 3px; }
.corner {
  position: absolute;
  right: 0;
  padding: 4px;
  background: #f0f0f0;
  border: 1px solid #ccc;
  border-right: 0;
}
.corner button { width: 23px; height: 22px; display: grid; place-items: center; background: #fff; border: 1px solid #bbb; border-radius: 3px; }
.corner svg { width: 13px; height: 13px; }
.corner-top { top: 0; border-top: 0; border-radius: 0 0 0 4px; }
.corner-mid { top: 42%; border-radius: 4px 0 0 4px; }
.corner-low { bottom: 0; border-bottom: 0; border-radius: 4px 0 0 0; }
.editor-foot { height: 32px; line-height: 32px; border-top: 1px solid #ccc; background: #fafafa; color: #111; text-align: center; }

/* action palette */
.center { display: grid; grid-template-rows: minmax(0, 558fr) 6px minmax(0, 217fr); min-height: 0; }
.palette {
  padding: 5px 7px 0 6px;
  background: #fff;
  color: #000;
  font-family: "Liberation Sans", Arial, sans-serif;
  overflow: hidden;
}
.search {
  margin: 0 21px 0 1px;
  height: 30px;
  display: flex;
  border: 1px solid #c4c4c4;
  border-radius: 3px;
  overflow: hidden;
}
.search label { width: 33px; background: #eee; display: grid; place-items: center; border-right: 1px solid #ccc; }
.search svg, .side svg { width: 14px; height: 14px; }
.search input { flex: 1; min-width: 0; padding: 0 10px; box-shadow: inset 0 1px 1px rgba(0,0,0,.08); }
.search input::placeholder { color: #999; opacity: 1; }
.search button { width: 31px; display: grid; place-items: center; border-left: 1px solid #ccc; }
.palette-body { display: flex; gap: 6px; padding-top: 10px; }
.side { display: flex; flex-direction: column; gap: 5px; width: 31px; padding-top: 1px; flex: none; }
.side button { height: 30px; display: grid; place-items: center; border: 1px solid #c6c6c6; border-radius: 3px; }
.cards { flex: 1; max-width: 900px; display: grid; grid-template-columns: repeat(auto-fill, 119px); gap: 10px; }
.card {
  height: 84px;
  padding-top: 2px;
  display: flex;
  flex-direction: column;
  align-items: center;
  border: 1px solid #c4c4c4;
  border-radius: 2px;
  box-shadow: 0 0 5px rgba(0,0,0,.2);
  background: #fff url("data:image/svg+xml,%3Csvg xmlns='http://www.w3.org/2000/svg' width='119' height='84'%3E%3Cpath d='M4 0H32C26 6 22 14 23 19C24 30 32 32 39 28C46 25 58 23 64 22C65 34 62 46 60 58C64 66 72 64 78 58C84 53 94 53 102 58C111 66 110 76 104 84H72C68 79 64 80 62 84H31C34 72 24 65 14 66C8 66 3 69 0 75V21C6 17 8 11 4 5Z' fill='%23f6f6f6'/%3E%3C/svg%3E") no-repeat;
}
.card span { line-height: 16px; text-align: center; }
.card i { flex: 1; display: grid; align-items: center; padding: 0 0 2px 3px; font-style: normal; }
.card svg { width: 32px; height: 32px; }

/* welcome page */
.welcome { display: flex; min-height: 0; overflow: hidden; background: #fff; font-family: Lato, sans-serif; font-size: 14px; }
.premium { flex: 0 0 50%; padding: 34px 35px 0 35px; color: #4a4a4a; }
.premium h2 { line-height: 19px; text-align: center; color: #bf524c; font-size: 15px; font-weight: bold; margin-bottom: 21px; }
.premium ul { font-size: 14px; }
.premium li { height: 58px; display: grid; grid-template-columns: 36px minmax(0, 1fr) 22px; gap: 22px; align-items: center; }
.premium li:last-child { padding-bottom: 18px; }
.premium li + li { background: radial-gradient(ellipse at 50% 0, #f2f2f2, transparent 60%) 0 0 / 100% 8px no-repeat; }
.premium .feature { width: 36px; height: 36px; }
.premium li div { line-height: 18px; }
.premium li a { display: block; line-height: 15px; color: #bf524c; font-size: 12px; font-weight: bold; }
.premium .blue { color: #5183a3; }
.ext { display: inline-block; width: 12px; height: 12px; vertical-align: -1px; }
.premium button { width: 22px; height: 22px; border-radius: 50%; background: #52809e; color: #fff; font-size: 12px; font-weight: bold; box-shadow: 0 4px 8px rgba(82,128,158,.3); }
.start { position: relative; flex: 1; min-width: 0; padding: 30px 18px 0 35px; background: #333; }
.start-link { display: block; padding-right: 20px; line-height: 20px; text-align: right; color: #b1504b; font-size: 16px; }
.start h2 { line-height: 22px; margin-top: 15px; color: #fff; font-size: 18px; font-weight: bold; }
.video { height: 81px; display: flex; align-items: flex-start; gap: 15px; padding-top: 7px; color: #6f6f6f; }
.video p { font-size: 14px; line-height: 17px; }
.video svg { width: 75px; height: 53px; margin-top: 10px; border-radius: 10px; box-shadow: 0 16px 40px rgba(150,60,60,.35); }
.float-tools { position: absolute; top: 10px; right: 2px; display: flex; flex-direction: column; gap: 1px; }
.float-tools button { width: 20px; height: 20px; display: grid; place-items: center; background: #a398cf; border: 1px solid #8878b4; }
.float-tools .tall { height: 31px; }
.float-tools svg { width: 18px; height: 18px; }
.float-tools .tall svg { height: 28px; }
.scrollbar { flex: 0 0 17px; padding: 0 2px; display: flex; flex-direction: column; align-items: center; background: #f1f1f1; }
.scrollbar span { flex: 0 0 42%; width: 13px; margin-top: 6px; background: #c1c1c1; }
.scrollbar b { border: 4px solid transparent; }
.scrollbar .up { margin-top: 3px; border-bottom-color: #999; }
.scrollbar .down { margin: auto 0 3px; border-top-color: #444; }

/* docks */
.dock-head {
  flex: none;
  height: 22px;
  padding: 0 1px 0 4px;
  display: flex;
  align-items: center;
  justify-content: space-between;
  background: #3d3d3d;
  border-bottom: 2px solid #4a4a4a;
}
.dock-head svg { width: 10px; height: 10px; }
.resources { display: flex; flex-direction: column; min-height: 0; background: #333; }
.resources-body {
  flex: 1;
  display: flex;
  flex-direction: column;
  align-items: center;
  justify-content: center;
  gap: 10px;
  text-align: center;
  font-family: "DejaVu Sans", Verdana, sans-serif;
  font-size: 11px;
}
.resources-body p { font-size: 11px; }
.resources-body svg { display: inline-block; width: 12px; height: 14px; }
.create { height: 22px; padding: 0 5px; border: 1px solid #5e5e5e; border-radius: 2px; background: linear-gradient(#4a4a4a, #404040); box-shadow: 0 0 0 1px #282828; }

.log { flex: none; display: flex; flex-direction: column; }
.log .dock-head { height: 24px; }
.log-body {
  height: 130px;
  margin: 0 1px;
  padding: 8px 17px;
  display: flex;
  justify-content: flex-end;
  gap: 12px;
  background: #232323;
  border: 2px solid #2e2e2e;
}
.log-body button { width: 28px; height: 28px; display: grid; place-items: center; border: 1px solid #5c5c5c; border-radius: 2px; background: linear-gradient(#484848, #3c3c3c); }
.log-body svg { width: 20px; height: 20px; }
.tabs { height: 27px; display: flex; align-items: flex-start; gap: 2px; padding-left: 1px; border-top: 1px solid #262626; }
.tabs button { height: 23px; padding: 1px 11px 0; background: #303030; border: 1px solid #4a4a4a; border-top: 0; border-radius: 0 0 2px 2px; }
.tabs .active { height: 25px; background: #363636; }
.taskbar { flex: none; height: 2px; border-top: 1px solid #0b0d0f; background: linear-gradient(90deg, #46525c 0 60px, #c5cdd2 60px 118px, #46525c 118px 124px, #c5cdd2 124px 180px, #46525c 180px 432px, #c5cdd2 432px 490px, #46525c 490px 496px, #c5cdd2 496px 680px, #46525c 680px); }
```
